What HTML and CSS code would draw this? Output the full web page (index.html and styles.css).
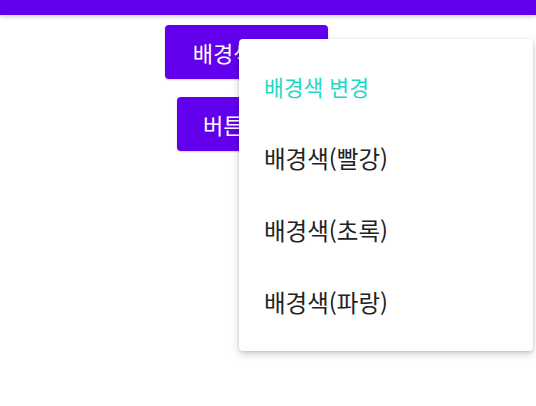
FILE: index.html
```html
<!DOCTYPE html>
<html lang="ko">
<head>
<meta charset="utf-8">
<link rel="stylesheet" href="styles.css">
</head>
<body>
<div class="appbar"></div>
<main class="content">
  <div class="buttons">
    <button class="btn">배경색 변경</button>
    <button class="btn">버튼 클릭</button>
  </div>
</main>
<div class="menu">
  <div class="menu-title">배경색 변경</div>
  <div class="menu-item">배경색(빨강)</div>
  <div class="menu-item">배경색(초록)</div>
  <div class="menu-item">배경색(파랑)</div>
</div>
</body>
</html>
```
FILE: styles.css
```css
html, body {
  margin: 0;
  padding: 0;
  background: #ffffff;
  font-family: "Noto Sans CJK KR", "Noto Sans", Roboto, sans-serif;
  width: 536px;
  height: 406px;
  overflow: hidden;
}
.appbar {
  height: 15px;
  background: #6200ee;
  box-shadow: 0 2px 4px rgba(0,0,0,0.18);
}
.content {
  padding: 10px 0 0 165px;
}
.buttons {
  width: 163px;
  display: flex;
  flex-direction: column;
  align-items: center;
  gap: 18px;
}
.btn {
  height: 54px;
  border: none;
  border-radius: 4px;
  background: #6200ee;
  color: #ffffff;
  font-family: inherit;
  font-size: 22px;
  padding: 0 26px;
  box-shadow: 0 1px 2px rgba(0,0,0,0.2);
  white-space: nowrap;
}
.btn:first-child {
  width: 163px;
}
.menu {
  position: absolute;
  left: 239px;
  top: 39px;
  width: 294px;
  box-sizing: border-box;
  padding: 11px 0 13px;
  background: #ffffff;
  border-radius: 4px;
  box-shadow: 0 3px 8px rgba(0,0,0,0.18), 0 1px 3px rgba(0,0,0,0.12);
}
.menu-title, .menu-item {
  height: 72px;
  display: flex;
  align-items: center;
  padding-left: 25px;
  white-space: nowrap;
}
.menu-title {
  color: #1ed9c6;
  font-size: 21.5px;
}
.menu-item {
  color: #222222;
  font-size: 23.5px;
}
```
